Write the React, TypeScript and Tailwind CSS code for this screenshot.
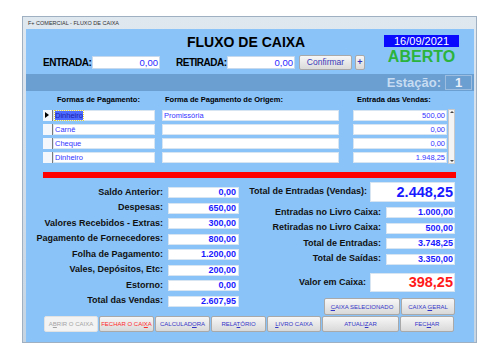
import React from 'react'

const leftRows = [
  ['Saldo Anterior:', '0,00'],
  ['Despesas:', '650,00'],
  ['Valores Recebidos - Extras:', '300,00'],
  ['Pagamento de Fornecedores:', '800,00'],
  ['Folha de Pagamento:', '1.200,00'],
  ['Vales, Depósitos, Etc:', '200,00'],
  ['Estorno:', '0,00'],
  ['Total das Vendas:', '2.607,95'],
]

const rightRows = [
  ['Entradas no Livro Caixa:', '1.000,00'],
  ['Retiradas no Livro Caixa:', '500,00'],
  ['Total de Entradas:', '3.748,25'],
  ['Total de Saídas:', '3.350,00'],
]

const gridRows = [
  { forma: 'Dinheiro', origem: 'Promissória', valor: '500,00' },
  { forma: 'Carnê', origem: '', valor: '0,00' },
  { forma: 'Cheque', origem: '', valor: '0,00' },
  { forma: 'Dinheiro', origem: '', valor: '1.948,25' },
]

function Btn({ children, className = '', disabled = false }: { children: React.ReactNode; className?: string; disabled?: boolean }) {
  return (
    <div
      className={
        'h-full flex items-center justify-center text-[6px] leading-none rounded-[2px] ' +
        (disabled
          ? 'bg-[#f3f3f3] border border-[#e2e2e2] text-[#a3a3a3] '
          : 'bg-linear-to-b from-[#f7f7f7] to-[#d9d9d9] border border-[#a9a9a9] ') +
        className
      }
    >
      <span className="whitespace-pre">{children}</span>
    </div>
  )
}

export default function App() {
  return (
    <div className="w-[500px] h-[361px] bg-white pt-[16px] pl-[22px] font-['Liberation_Sans',Arial,sans-serif]">
      <div className="w-[455px] h-[327px] flex flex-col border border-[#9fb0c2] bg-linear-to-b from-[#dfe7ef] to-[#c6d4e2]">
        <div className="h-[12px] pl-[5px] flex items-center text-[5.5px] text-[#333]">F+ COMERCIAL - FLUXO DE CAIXA</div>
        <div className="flex-1 ml-[3px] mr-[2px] bg-[#8ac3f8] flex flex-col">
          {/* cabeçalho */}
          <div className="h-[45px] flex">
            <div className="flex-1 flex flex-col pt-[3px]">
              <div className="pl-[161px] h-[20px] text-[14px] leading-[20px] font-bold text-black">FLUXO DE CAIXA</div>
              <div className="mt-[3px] pl-[17px] h-[15px] flex items-center">
                <span className="w-[49px] text-[10px] tracking-[-0.5px] font-bold">ENTRADA:</span>
                <div className="w-[68px] h-[13px] bg-white border border-[#c7d9ec] text-right text-[9.5px] leading-[11px] text-[#2a2aff] pr-[1px]">0,00</div>
                <span className="ml-[16px] w-[51px] text-[10px] tracking-[-0.5px] font-bold">RETIRADA:</span>
                <div className="w-[68px] h-[13px] bg-white border border-[#c7d9ec] text-right text-[9.5px] leading-[11px] text-[#2a2aff] pr-[1px]">0,00</div>
                <div className="ml-[4px] w-[53px] h-[15px] flex items-center justify-center rounded-[2px] border border-[#a9a9a9] bg-linear-to-b from-[#f7f7f7] to-[#dadada] text-[8.5px] text-[#3737b8]">Confirmar</div>
                <div className="ml-[3px] w-[10px] h-[15px] flex items-center justify-center rounded-[2px] border border-[#a9a9a9] bg-linear-to-b from-[#f7f7f7] to-[#dadada] text-[9px] font-bold text-[#3737b8]">+</div>
              </div>
            </div>
            <div className="w-[75px] mr-[15px] pt-[6px] flex flex-col items-center">
              <div className="w-full h-[12px] bg-[#0a0aff] text-white text-[11px] leading-[12px] text-center">16/09/2021</div>
              <div className="mt-[1px] text-[16px] leading-[17px] font-bold text-[#2bb33e]">ABERTO</div>
            </div>
          </div>

          {/* faixa estação */}
          <div className="h-[17px] bg-[#6b9ed1] flex items-center justify-end pr-[2px]">
            <span className="text-[13px] font-bold text-[#c6dcf2] mr-[4px]">Estação:</span>
            <div className="w-[27px] h-[15px] border border-[#9dbde0] flex items-center justify-center text-[13px] font-bold text-[#e8f0fa]">1</div>
          </div>

          {/* títulos da grade */}
          <div className="h-[17px] flex items-center text-[7.5px] font-bold text-black">
            <span className="ml-[31px] w-[108px]">Formas de Pagamento:</span>
            <span className="w-[192px]">Forma de Pagamento de Origem:</span>
            <span>Entrada das Vendas:</span>
          </div>

          {/* grade */}
          <div className="ml-[17px] w-[412px] h-[56px] flex">
            <div className="flex-1 flex flex-col pt-[2px] gap-[3px]">
              {gridRows.map((r, i) => (
                <div key={i} className="h-[11px] flex text-[7.5px] leading-[10px] text-[#3333ff]">
                  <div className="w-[10px] bg-[#f4f7fb] border-r border-[#7a7a7a] relative">
                    {i === 0 && (
                      <div className="absolute left-[2px] top-[2px] w-0 h-0 border-y-[3px] border-y-transparent border-l-[4px] border-l-black" />
                    )}
                  </div>
                  <div className="w-[102px] bg-white border border-[#d7e4f2] pl-[1px]">
                    {i === 0 ? (
                      <span className="bg-[#4d6cff] text-[#1c1cab] outline-1 outline-dotted outline-[#e8d23a]">{r.forma}</span>
                    ) : (
                      r.forma
                    )}
                  </div>
                  <div className="ml-[7px] w-[177px] bg-white border border-[#d7e4f2] pl-[1px]">{r.origem}</div>
                  <div className="ml-[14px] w-[94px] bg-white border border-[#d7e4f2] text-right pr-[1px]">{r.valor}</div>
                </div>
              ))}
            </div>
            <div className="ml-[1px] w-[7px] mt-[1px] bg-[#f4f4f4] border border-[#c9c9c9] flex flex-col justify-between items-center py-[1px]">
              <div className="w-0 h-0 border-x-[2px] border-x-transparent border-b-[2px] border-b-[#444]" />
              <div className="w-0 h-0 border-x-[2px] border-x-transparent border-t-[2px] border-t-[#444]" />
            </div>
          </div>

          {/* barra vermelha */}
          <div className="mt-[8px] ml-[17px] w-[413px] h-[6px] bg-[#ff0000]" />

          {/* totais */}
          <div className="flex">
            <div className="w-[213px] pt-[9px] flex flex-col gap-[4.5px]">
              {leftRows.map(([label, value]) => (
                <div key={label} className="h-[11px] flex items-center justify-end">
                  <span className="text-[9px] font-bold text-[#111] mr-[5px]">{label}</span>
                  <div className="w-[71px] h-[11px] bg-white border border-[#d7e4f2] text-right text-[9px] leading-[9px] font-bold text-[#1a1aff] pr-[2px]">{value}</div>
                </div>
              ))}
            </div>
            <div className="flex-1 mr-[19px] pt-[4px] flex flex-col items-end">
              <div className="flex items-center">
                <span className="text-[9px] font-bold text-[#111] mr-[3px]">Total de Entradas (Vendas):</span>
                <div className="w-[85px] h-[20px] bg-white border border-[#d7e4f2] text-right text-[14.5px] leading-[18px] font-bold text-[#1a1aff] pr-[1px]">2.448,25</div>
              </div>
              <div className="mt-[5px] flex flex-col items-end gap-[4.5px]">
                {rightRows.map(([label, value]) => (
                  <div key={label} className="h-[11px] flex items-center">
                    <span className="text-[9px] font-bold text-[#111] mr-[5px]">{label}</span>
                    <div className="w-[69px] h-[11px] bg-white border border-[#d7e4f2] text-right text-[9px] leading-[9px] font-bold text-[#1a1aff] pr-[1px]">{value}</div>
                  </div>
                ))}
              </div>
              <div className="mt-[8.5px] flex items-center">
                <span className="text-[9px] font-bold text-[#111] mr-[4px]">Valor em Caixa:</span>
                <div className="w-[85px] h-[19px] bg-white border border-[#d7e4f2] text-right text-[14.5px] leading-[17px] font-bold text-[#ff1a1a] pr-[1px]">398,25</div>
              </div>
              <div className="mt-[6px] h-[17px] flex gap-[1px]">
                <Btn className="w-[76px] text-[#3535c8]"><u>C</u>AIXA SELECIONADO</Btn>
                <Btn className="w-[54px] text-[#3535c8]">CAIXA <u>G</u>ERAL</Btn>
              </div>
            </div>
          </div>

          {/* botões */}
          <div className="mt-[1px] ml-[18px] h-[16px] flex gap-[1px]">
            <Btn disabled className="w-[54px]">A<u>B</u>RIR O CAIXA</Btn>
            <Btn className="w-[55px] text-[#ff2a2a]">FECHAR O CAI<u>X</u>A</Btn>
            <Btn className="w-[55px] text-[#3535c8]">CALCULAD<u>O</u>RA</Btn>
            <Btn className="w-[55px] text-[#3535c8]">RELA<u>T</u>ÓRIO</Btn>
            <Btn className="w-[54px] text-[#3535c8]"><u>L</u>IVRO CAIXA</Btn>
            <Btn className="w-[77px] text-[#3535c8]">ATUALI<u>Z</u>AR</Btn>
            <Btn className="w-[54px] text-[#3535c8]">FEC<u>H</u>AR</Btn>
          </div>
        </div>
      </div>
    </div>
  )
}
